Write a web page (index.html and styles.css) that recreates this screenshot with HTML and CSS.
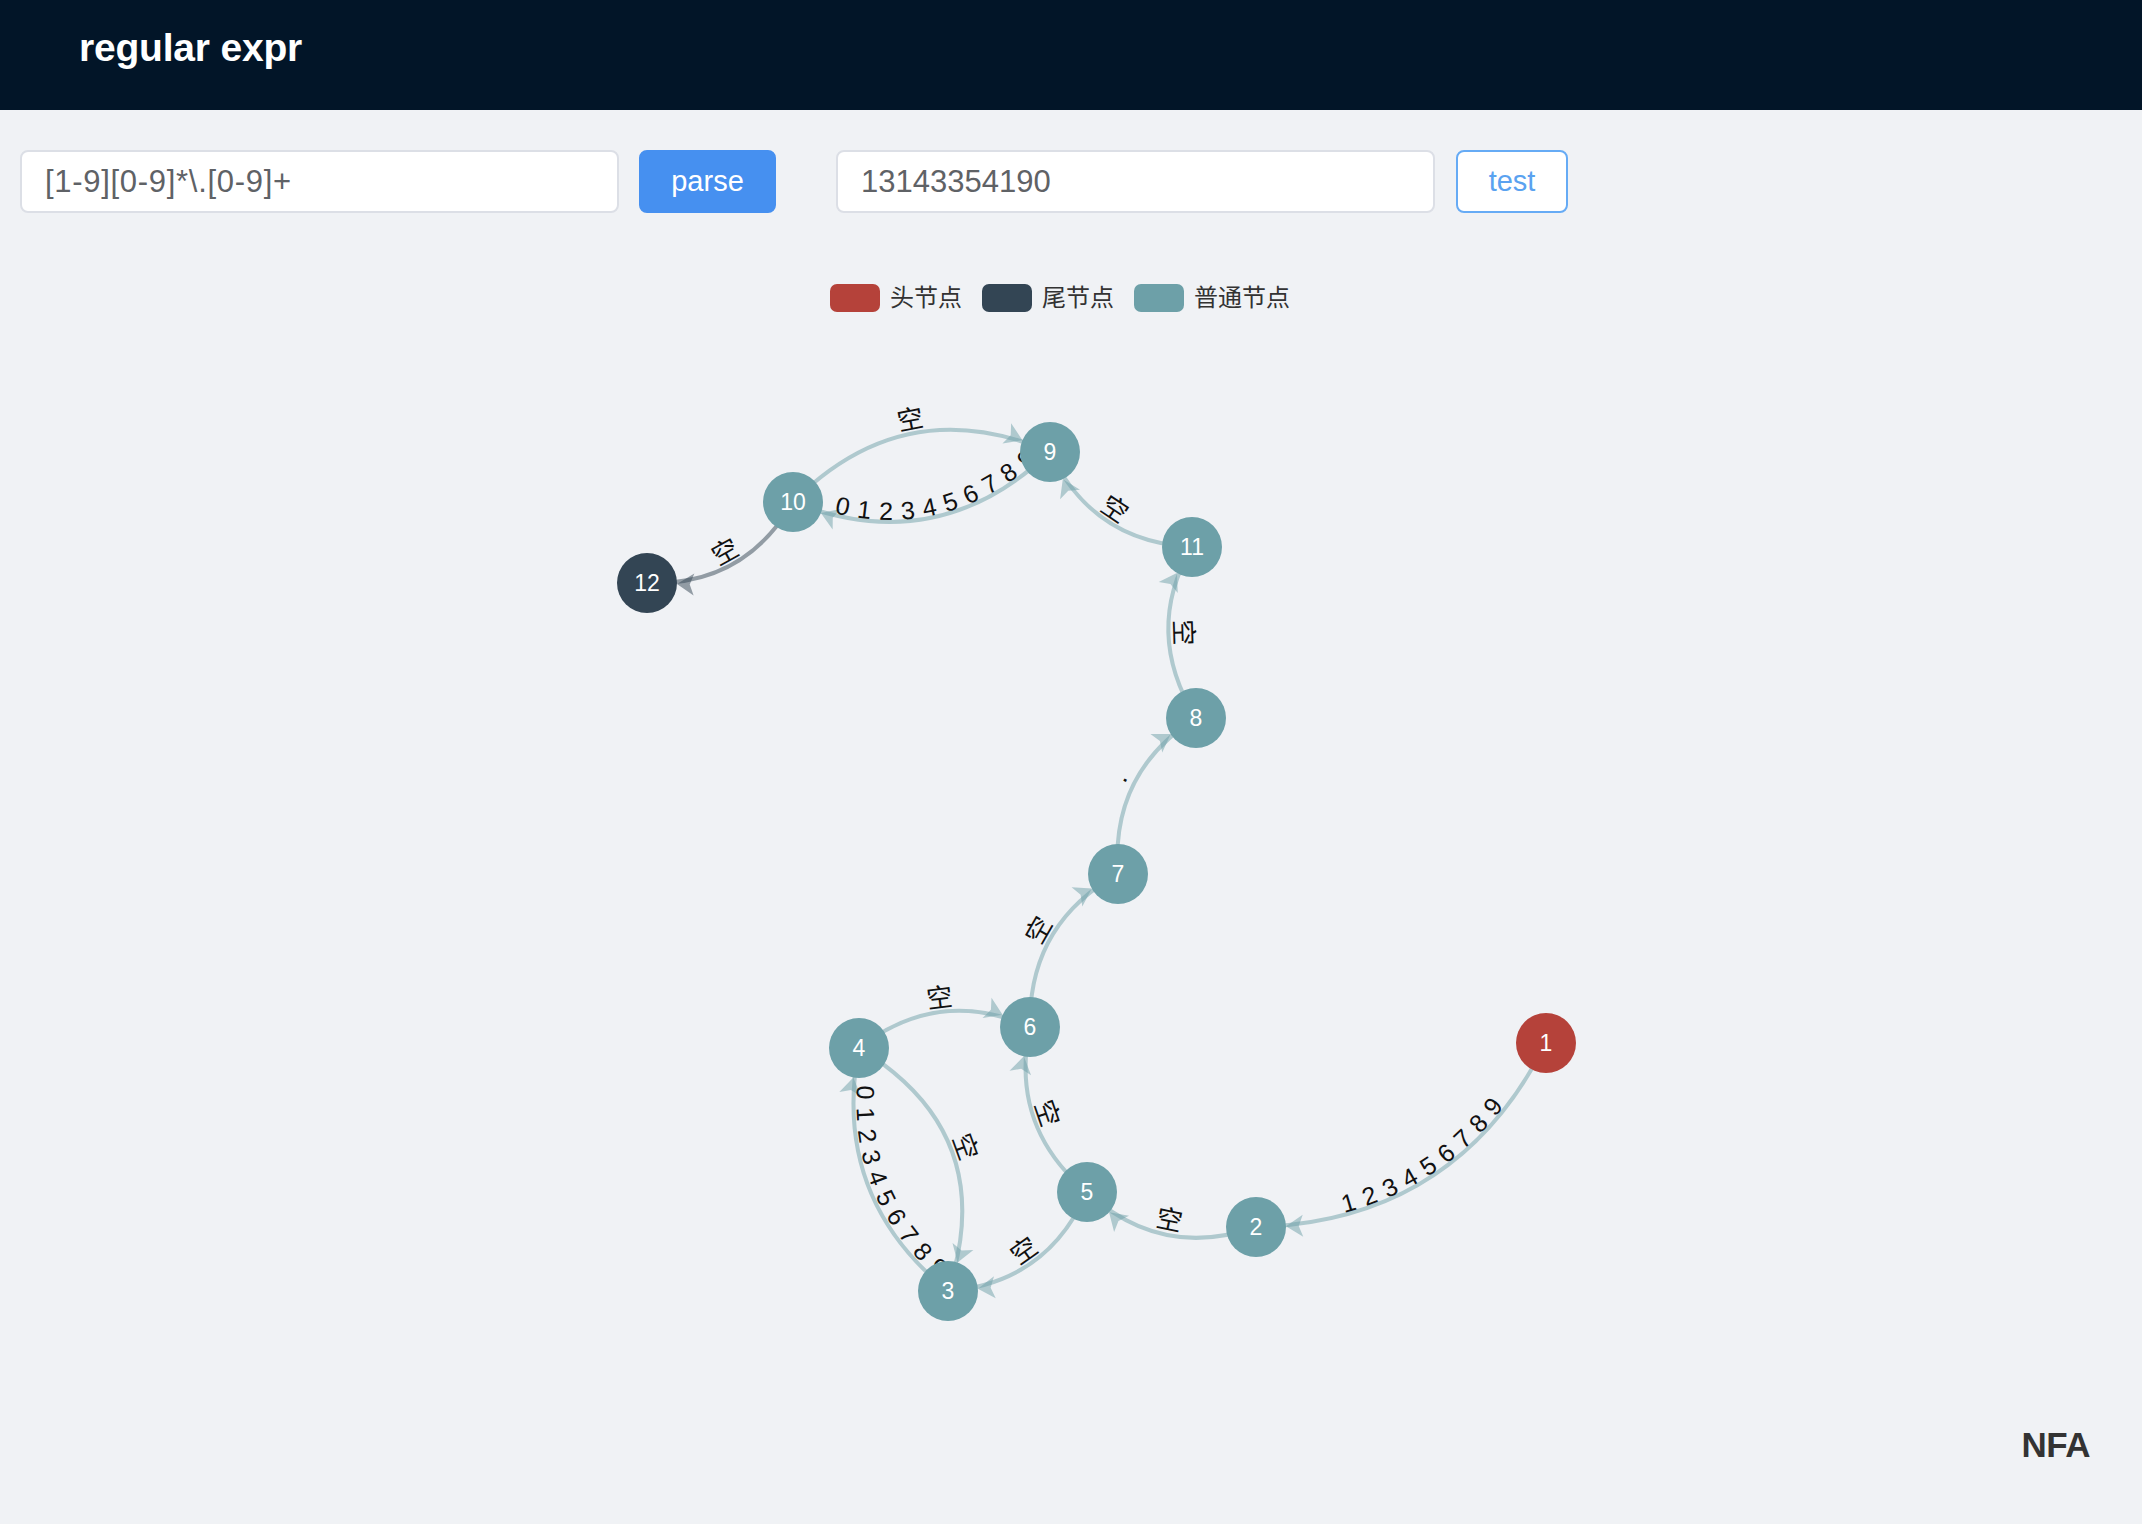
FILE: index.html
```html
<!DOCTYPE html>
<html lang="zh">
<head>
<meta charset="utf-8">
<title>regular expr</title>
<link rel="stylesheet" href="styles.css">
</head>
<body>
<header class="top-bar">
  <h1 class="brand">regular expr</h1>
</header>
<main class="workspace">
  <div class="toolbar">
    <div class="field field-regex"><input class="text-input text-input-regex" type="text" value="[1-9][0-9]*\.[0-9]+"></div>
    <button class="btn btn-primary" type="button">parse</button>
    <div class="field field-test"><input class="text-input" type="text" value="13143354190"></div>
    <button class="btn btn-outline" type="button">test</button>
  </div>
  <section class="chart">
    <ul class="legend">
      <li class="legend-item"><span class="swatch swatch-head"></span>头节点</li>
      <li class="legend-item"><span class="swatch swatch-tail"></span>尾节点</li>
      <li class="legend-item"><span class="swatch swatch-normal"></span>普通节点</li>
    </ul>
    <svg class="graph" viewBox="0 312 2142 1108" width="2142" height="1108" xmlns="http://www.w3.org/2000/svg">
      <defs>
        <marker id="arrow-teal" viewBox="-50 -12 52 24" markerWidth="52" markerHeight="24" refX="0" refY="0" orient="auto" markerUnits="userSpaceOnUse">
          <path class="arrow-teal" d="M-30 0 L-47 -11 L-42.75 0 L-47 11 Z"/>
        </marker>
        <marker id="arrow-dark" viewBox="-50 -12 52 24" markerWidth="52" markerHeight="24" refX="0" refY="0" orient="auto" markerUnits="userSpaceOnUse">
          <path class="arrow-dark" d="M-30 0 L-47 -11 L-42.75 0 L-47 11 Z"/>
        </marker>
        <path id="t1" d="M1256,1227 Q1456.2,1222 1546,1043"/>
        <path id="t2" d="M1087,1192 Q1161,1260.2 1256,1227"/>
        <path id="t3" d="M948,1291 Q1047.2,1283.2 1087,1192"/>
        <path id="t4" d="M1030,1027 Q1009,1126.6 1087,1192"/>
        <path id="t5" d="M859,1048 Q938.2,986.2 1030,1027"/>
        <path id="t6" d="M859,1048 Q1000.7,1133.9 948,1291"/>
        <path id="t7" d="M859,1048 Q830.6,1196.2 948,1291"/>
        <path id="t8" d="M1030,1027 Q1028.1,924.1 1118,874"/>
        <path id="t9" d="M1118,874 Q1110.2,772.6 1196,718"/>
        <path id="t10" d="M1192,547 Q1142.7,631.3 1196,718"/>
        <path id="t11" d="M1050,452 Q1092.5,542.1 1192,547"/>
        <path id="t12" d="M793,502 Q904.5,389.6 1050,452"/>
        <path id="t13" d="M793,502 Q937.5,559.2 1050,452"/>
        <path id="t14" d="M647,583 Q744.3,586.3 793,502"/>
      </defs>

      <g class="edges">
        <path class="edge" d="M1546,1043 Q1456.2,1222 1256,1227" marker-end="url(#arrow-teal)"/>
        <path class="edge" d="M1256,1227 Q1161,1260.2 1087,1192" marker-end="url(#arrow-teal)"/>
        <path class="edge" d="M1087,1192 Q1047.2,1283.2 948,1291" marker-end="url(#arrow-teal)"/>
        <path class="edge" d="M1087,1192 Q1009,1126.6 1030,1027" marker-end="url(#arrow-teal)"/>
        <path class="edge" d="M859,1048 Q938.2,986.2 1030,1027" marker-end="url(#arrow-teal)"/>
        <path class="edge" d="M859,1048 Q1000.7,1133.9 948,1291" marker-end="url(#arrow-teal)"/>
        <path class="edge" d="M948,1291 Q830.6,1196.2 859,1048" marker-end="url(#arrow-teal)"/>
        <path class="edge" d="M1030,1027 Q1028.1,924.1 1118,874" marker-end="url(#arrow-teal)"/>
        <path class="edge" d="M1118,874 Q1110.2,772.6 1196,718" marker-end="url(#arrow-teal)"/>
        <path class="edge" d="M1196,718 Q1142.7,631.3 1192,547" marker-end="url(#arrow-teal)"/>
        <path class="edge" d="M1192,547 Q1092.5,542.1 1050,452" marker-end="url(#arrow-teal)"/>
        <path class="edge" d="M793,502 Q904.5,389.6 1050,452" marker-end="url(#arrow-teal)"/>
        <path class="edge" d="M1050,452 Q937.5,559.2 793,502" marker-end="url(#arrow-teal)"/>
        <path class="edge edge-dark" d="M793,502 Q744.3,586.3 647,583" marker-end="url(#arrow-dark)"/>
      </g>

      <g class="edge-labels">
        <text class="edge-label edge-label-digits" dy="-2"><textPath href="#t1" startOffset="52%">1 2 3 4 5 6 7 8 9</textPath></text>
        <text class="edge-label" dy="-6"><textPath href="#t2" startOffset="50%">空</textPath></text>
        <text class="edge-label" dy="-5"><textPath href="#t3" startOffset="50%">空</textPath></text>
        <text class="edge-label" dy="-5"><textPath href="#t4" startOffset="50%">空</textPath></text>
        <text class="edge-label" dy="-5"><textPath href="#t5" startOffset="50%">空</textPath></text>
        <text class="edge-label" dy="-5"><textPath href="#t6" startOffset="50%">空</textPath></text>
        <text class="edge-label edge-label-digits" dy="-3"><textPath href="#t7" startOffset="54%">0 1 2 3 4 5 6 7 8 9</textPath></text>
        <text class="edge-label" dy="-5"><textPath href="#t8" startOffset="50%">空</textPath></text>
        <text class="edge-label" dy="-8"><textPath href="#t9" startOffset="50%">.</textPath></text>
        <text class="edge-label" dy="-6"><textPath href="#t10" startOffset="50%">空</textPath></text>
        <text class="edge-label" dy="-5"><textPath href="#t11" startOffset="50%">空</textPath></text>
        <text class="edge-label" dy="-5"><textPath href="#t12" startOffset="50%">空</textPath></text>
        <text class="edge-label edge-label-digits" dy="-2"><textPath href="#t13" startOffset="55%">0 1 2 3 4 5 6 7 8 9</textPath></text>
        <text class="edge-label" dy="-5"><textPath href="#t14" startOffset="50%">空</textPath></text>
      </g>

      <g class="nodes">
        <circle class="node node-head" cx="1546" cy="1043" r="30"/>
        <circle class="node" cx="1256" cy="1227" r="30"/>
        <circle class="node" cx="948" cy="1291" r="30"/>
        <circle class="node" cx="859" cy="1048" r="30"/>
        <circle class="node" cx="1087" cy="1192" r="30"/>
        <circle class="node" cx="1030" cy="1027" r="30"/>
        <circle class="node" cx="1118" cy="874" r="30"/>
        <circle class="node" cx="1196" cy="718" r="30"/>
        <circle class="node" cx="1050" cy="452" r="30"/>
        <circle class="node" cx="793" cy="502" r="30"/>
        <circle class="node" cx="1192" cy="547" r="30"/>
        <circle class="node node-tail" cx="647" cy="583" r="30"/>
      </g>
      <g class="node-labels">
        <text class="node-label" x="1546" y="1043">1</text>
        <text class="node-label" x="1256" y="1227">2</text>
        <text class="node-label" x="948" y="1291">3</text>
        <text class="node-label" x="859" y="1048">4</text>
        <text class="node-label" x="1087" y="1192">5</text>
        <text class="node-label" x="1030" y="1027">6</text>
        <text class="node-label" x="1118" y="874">7</text>
        <text class="node-label" x="1196" y="718">8</text>
        <text class="node-label" x="1050" y="452">9</text>
        <text class="node-label" x="793" y="502">10</text>
        <text class="node-label" x="1192" y="547">11</text>
        <text class="node-label" x="647" y="583">12</text>
      </g>
    </svg>
    <div class="chart-title">NFA</div>
  </section>
</main>
</body>
</html>
```

FILE: styles.css
```css
html {
  background: #f0f2f5;
}

body {
  margin: 0;
  background: #f0f2f5;
  font-family: "Liberation Sans", "Noto Sans CJK SC", Arial, sans-serif;
  color: #333;
  overflow: hidden;
}

.top-bar {
  height: 110px;
  background: #021528;
  display: flex;
  align-items: center;
  padding: 0 0 14px 79px;
  box-sizing: border-box;
}

.brand {
  margin: 0;
  color: #ffffff;
  font-size: 39px;
  font-weight: 700;
  letter-spacing: -0.2px;
  line-height: 46px;
}

.workspace {
  display: flex;
  flex-direction: column;
}

.toolbar {
  display: flex;
  align-items: center;
  gap: 20px;
  margin-top: 40px;
  padding-left: 20px;
}

.field {
  width: 599px;
  height: 63px;
}

.field-test {
  margin-left: 40px;
}

.text-input {
  box-sizing: border-box;
  width: 100%;
  height: 100%;
  border: 2px solid #dcdfe6;
  border-radius: 8px;
  background: #ffffff;
  padding: 0 0 0 23px;
  font-family: "Liberation Sans", Arial, sans-serif;
  font-size: 31px;
  color: #5f6266;
  outline: none;
}

.text-input-regex {
  letter-spacing: 0.7px;
}

.btn {
  box-sizing: border-box;
  height: 63px;
  border-radius: 8px;
  font-family: "Liberation Sans", Arial, sans-serif;
  font-size: 29px;
  padding: 0;
  cursor: pointer;
}

.btn-primary {
  width: 137px;
  background: #4690f0;
  border: 2px solid #4690f0;
  color: #ffffff;
}

.btn-outline {
  width: 112px;
  margin-left: 1px;
  background: #ffffff;
  border: 2px solid #66abf5;
  color: #5aa2f0;
}

.chart {
  display: flex;
  flex-direction: column;
}

.legend {
  list-style: none;
  margin: 71px 0 0 0;
  padding: 0 22px 0 0;
  display: flex;
  justify-content: center;
  gap: 20px;
}

.legend-item {
  display: flex;
  align-items: center;
  gap: 10px;
  font-family: "Liberation Sans", "Noto Sans CJK SC", sans-serif;
  font-size: 24px;
  line-height: 28px;
  color: #333;
}

.swatch {
  width: 50px;
  height: 28px;
  border-radius: 7px;
}

.swatch-head { background: #b5423a; }
.swatch-tail { background: #334554; }
.swatch-normal { background: #6da0a8; }

.graph {
  display: block;
}

.edge {
  fill: none;
  stroke: #6da0a8;
  stroke-opacity: 0.5;
  stroke-width: 4;
}

.edge-dark {
  stroke: #334554;
}

.arrow-teal {
  fill: #6da0a8;
  fill-opacity: 0.5;
}

.arrow-dark {
  fill: #334554;
  fill-opacity: 0.5;
}

.edge-label {
  font-family: "Liberation Sans", "Noto Sans CJK SC", sans-serif;
  font-size: 26px;
  fill: #111;
  text-anchor: middle;
}

.edge-label-digits {
  font-size: 25px;
  letter-spacing: 1px;
}

.node {
  fill: #6da0a8;
}

.node-head { fill: #b5423a; }
.node-tail { fill: #334554; }

.node-label {
  font-family: "Liberation Sans", Arial, sans-serif;
  font-size: 23px;
  fill: #ffffff;
  text-anchor: middle;
  dominant-baseline: central;
}

.chart-title {
  margin-top: 5px;
  padding-right: 52px;
  text-align: right;
  font-family: "Liberation Sans", Arial, sans-serif;
  font-size: 35px;
  font-weight: 700;
  letter-spacing: -0.5px;
  line-height: 40px;
  color: #333;
}
```
